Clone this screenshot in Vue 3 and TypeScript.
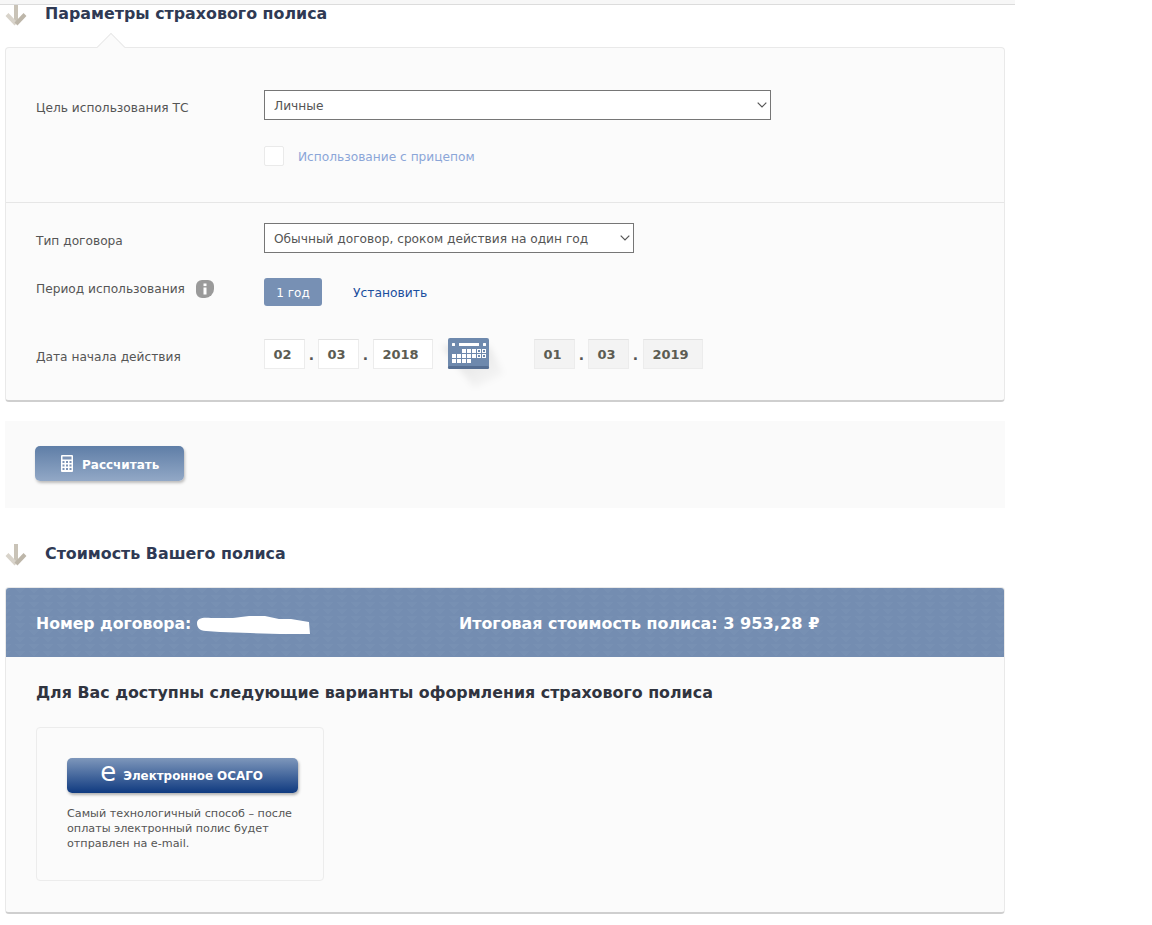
<script setup lang="ts">
const startDate = ['02', '03', '2018']
const endDate = ['01', '03', '2019']
const solidCells: number[][] = [
  [2, 0], [3, 0], [4, 0],
  [0, 1], [1, 1], [2, 1], [3, 1], [4, 1],
  [0, 2], [1, 2], [2, 2], [3, 2],
]
const hollowCells: number[][] = [
  [5, 0], [6, 0],
  [5, 1], [6, 1],
]
</script>

<template>
  <div class="page">
    <div class="strip"></div>

    <div class="head head-first">
      <svg class="arrow" width="22" height="23" viewBox="0 0 22 23">
        <path d="M11 0v20" fill="none" stroke="#c9c3b7" stroke-width="4" />
        <path d="M2 10.500l9 9.500" fill="none" stroke="#d8d3ca" stroke-width="4" />
        <path d="M20 10.500l-9 9.500" fill="none" stroke="#bdb6a9" stroke-width="4" />
      </svg>
      <h2>Параметры страхового полиса</h2>
    </div>

    <section class="panel params">
      <span class="notch"></span>
      <div class="block block-a">
        <div class="row row-use">
          <label class="lbl">Цель использования ТС</label>
          <select class="sel sel-wide"><option>Личные</option></select>
        </div>
        <div class="row row-check">
          <span class="lbl"></span>
          <span class="box"></span>
          <span class="check-text">Использование с прицепом</span>
        </div>
      </div>
      <div class="block block-b">
        <div class="row row-type">
          <label class="lbl">Тип договора</label>
          <select class="sel sel-mid"><option>Обычный договор, сроком действия на один год</option></select>
        </div>
        <div class="row row-period">
          <div class="lbl lbl-info">
            Период использования
            <svg class="info" width="18" height="18" viewBox="0 0 18 18">
              <path d="M6 0h6a6 6 0 0 1 6 6v3a9 9 0 0 1-9 9H6a6 6 0 0 1-6-6V6a6 6 0 0 1 6-6z" fill="#9a9a9a" />
              <rect x="7.500" y="7.500" width="3" height="7" fill="#fff" />
              <rect x="7.500" y="3.500" width="3" height="2.600" fill="#fff" />
            </svg>
          </div>
          <span class="pill">1 год</span>
          <a class="set">Установить</a>
        </div>
        <div class="row row-date">
          <label class="lbl">Дата начала действия</label>
          <div class="dates">
            <template v-for="(d, i) in startDate" :key="'s' + i">
              <span class="dot" v-if="i > 0">.</span>
              <span class="dt" :class="{ year: i === 2 }">{{ d }}</span>
            </template>
          </div>
          <span class="cal">
            <svg class="cal-icon" width="41" height="31" viewBox="0 0 41 31">
              <defs>
                <linearGradient id="calShade" x1="0" y1="0" x2="1" y2="1">
                  <stop offset="0.300" stop-color="#000" stop-opacity="0.09" />
                  <stop offset="1" stop-color="#000" stop-opacity="0" />
                </linearGradient>
                <filter id="calBlur" x="-30%" y="-30%" width="160%" height="160%">
                  <feGaussianBlur stdDeviation="3" />
                </filter>
              </defs>
              <polygon points="-6,8 41,8 56,36 26,50" fill="url(#calShade)" filter="url(#calBlur)" />
              <rect width="41" height="31" rx="2" fill="#6e89ad" />
              <rect y="28" width="41" height="3" rx="1.500" fill="#566f93" />
              <rect x="11" y="5" width="20" height="3" fill="#fff" />
              <rect x="4" y="5" width="3" height="3" rx="0.500" fill="#fff" />
              <rect x="35" y="5" width="3" height="3" rx="0.500" fill="#fff" />
              <rect
                v-for="(p, i) in solidCells"
                :key="'c' + i"
                :x="4 + p[0] * 5"
                :y="11 + p[1] * 5"
                width="4"
                height="4"
                fill="#fff"
              />
              <rect
                v-for="(p, i) in hollowCells"
                :key="'h' + i"
                :x="4.500 + p[0] * 5"
                :y="11.500 + p[1] * 5"
                width="3"
                height="3"
                fill="none"
                stroke="#fff"
                stroke-width="1"
              />
            </svg>
          </span>
          <div class="dates dates-end">
            <template v-for="(d, i) in endDate" :key="'e' + i">
              <span class="dot" v-if="i > 0">.</span>
              <span class="dt off" :class="{ year: i === 2 }">{{ d }}</span>
            </template>
          </div>
        </div>
      </div>
    </section>

    <div class="calc">
      <button class="btn-calc">
        <svg width="12" height="17" viewBox="0 0 12 17">
          <rect width="12" height="17" rx="1" fill="#fff" />
          <rect x="1.500" y="1.500" width="9" height="3" fill="#7c93b5" />
          <g fill="#7c93b5">
            <rect x="1.500" y="6" width="2" height="2" /><rect x="5" y="6" width="2" height="2" /><rect x="8.500" y="6" width="2" height="2" />
            <rect x="1.500" y="9.500" width="2" height="2" /><rect x="5" y="9.500" width="2" height="2" /><rect x="8.500" y="9.500" width="2" height="2" />
            <rect x="1.500" y="13" width="2" height="2" /><rect x="5" y="13" width="2" height="2" /><rect x="8.500" y="13" width="2" height="2" />
          </g>
        </svg>
        <span class="calc-text">Рассчитать</span>
      </button>
    </div>

    <div class="head head-second">
      <svg class="arrow" width="22" height="23" viewBox="0 0 22 23">
        <path d="M11 0v20" fill="none" stroke="#c9c3b7" stroke-width="4" />
        <path d="M2 10.500l9 9.500" fill="none" stroke="#d8d3ca" stroke-width="4" />
        <path d="M20 10.500l-9 9.500" fill="none" stroke="#bdb6a9" stroke-width="4" />
      </svg>
      <h2>Стоимость Вашего полиса</h2>
    </div>

    <section class="panel result">
      <div class="band">
        <div class="contract">
          Номер договора:
          <svg class="blot" width="113" height="20" viewBox="0 0 113 20">
            <path d="M0 8C0 3 6 2 14 3l22 0 16-2 16 0 14 3 12 0 18 3 1 12-30 0-30-1-30-1-14-1C2 16 0 12 0 8z" fill="#fff" />
          </svg>
        </div>
        <div class="total">Итоговая стоимость полиса: <span class="sum">3 953,28 ₽</span></div>
      </div>
      <div class="body">
        <h3>Для Вас доступны следующие варианты оформления страхового полиса</h3>
        <div class="card">
          <button class="btn-osago"><span class="e">e</span>Электронное ОСАГО</button>
          <p>Самый технологичный способ – после оплаты электронный полис будет отправлен на e-mail.</p>
        </div>
      </div>
    </section>
  </div>
</template>

<style>
html, body { background: #fff; }
</style>

<style scoped>
.page {
  width: 1015px;
  height: 925px;
  font-family: "DejaVu Sans", Verdana, sans-serif;
  color: #555;
  font-size: 12px;
  overflow: hidden;
}
.strip {
  position: relative;
  z-index: 1;
  height: 4px;
  background: #f7f7f7;
  border-bottom: 1px solid #dcdcdc;
}
.head {
  display: flex;
  align-items: center;
  padding-left: 5px;
  height: 20px;
}
.head-first { margin-top: -1px; }
.head-second { margin-top: 36px; }
.arrow { flex: none; margin-top: 2px; }
.head h2 {
  margin: -2px 0 0 18px;
  font-size: 15.87px;
  font-weight: 700;
  color: #2f3a54;
  white-space: nowrap;
}
.panel {
  position: relative;
  margin-left: 5px;
  width: 1000px;
  box-sizing: border-box;
  background: #fbfbfb;
  border: 1px solid #e9e9e9;
  border-bottom: 2px solid #cfcfcf;
  border-radius: 4px;
}
.params { margin-top: 23px; height: 355px; }
.notch {
  position: absolute;
  top: -11px;
  left: 95px;
  width: 20px;
  height: 20px;
  box-sizing: border-box;
  background: #fbfbfb;
  border-top: 1px solid #e9e9e9;
  border-left: 1px solid #e9e9e9;
  transform: rotate(45deg);
}
.block-a {
  position: relative;
  height: 155px;
  box-sizing: border-box;
  padding-top: 42px;
  border-bottom: 1px solid #e6e6e6;
}
.block-b { padding-top: 20px; }
.row { display: flex; align-items: center; padding-left: 30px; }
.lbl { width: 228px; flex: none; color: #555; font-size: 12.2px; }
.lbl-info { display: flex; align-items: center; margin-top: -6px; white-space: nowrap; }
.info { margin-left: 11px; flex: none; }
.sel {
  height: 30px;
  box-sizing: border-box;
  font: 12.2px "DejaVu Sans", Verdana, sans-serif;
  color: #555;
  border: 1px solid #767676;
  border-radius: 0;
  padding: 1px 0 0 9px;
  appearance: none;
  background: #fff url("data:image/svg+xml,%3Csvg xmlns='http://www.w3.org/2000/svg' width='10' height='6'%3E%3Cpath d='M.7.7l4.300 4.300L9.300.7' fill='none' stroke='%23555' stroke-width='1.200'/%3E%3C/svg%3E") no-repeat right 3.500px center;
}
.sel-wide { width: 507px; }
.sel-mid { width: 370px; }
.row-use .lbl { margin-top: 6px; }
.row-type .lbl { margin-top: 6px; }
.row-date .lbl { margin-top: 6px; }
.row-check { margin-top: 26px; }
.box {
  width: 20px;
  height: 20px;
  box-sizing: border-box;
  background: #fff;
  border: 1px solid #eaeaea;
  border-radius: 2px;
}
.check-text { margin: 2px 0 0 14px; color: #8ba6d8; font-size: 12.2px; }
.row-period { margin-top: 25px; }
.pill {
  width: 58px;
  height: 28px;
  line-height: 30px;
  text-align: center;
  color: #fff;
  background: #7790b4;
  border-radius: 3px;
}
.set { margin: 2px 0 0 31px; color: #1b4f9e; font-size: 12.3px; }
.row-date { margin-top: 32px; }
.dates { display: flex; align-items: center; }
.dates-end { margin-left: 45px; }
.dt {
  width: 41px;
  height: 30px;
  line-height: 29px;
  box-sizing: border-box;
  text-align: center;
  background: #fff;
  border: 1px solid #ececec;
  border-top-color: #e2e2e2;
  font-weight: 700;
  font-size: 13px;
  color: #5c5c52;
  padding-right: 4px;
}
.dt.year { width: 60px; margin-left: 1px; padding-right: 5px; }
.dt.off { background: #f3f3f3; }
.dot {
  width: 13px;
  text-align: center;
  font-weight: 700;
  font-size: 14px;
  color: #555;
  padding-top: 2px;
}
.cal {
  display: block;
  height: 31px;
  margin-left: 15px;
}
.cal-icon { display: block; overflow: visible; }
.calc {
  margin: 19px 0 0 5px;
  width: 1000px;
  height: 87px;
  background: #fafafa;
  padding: 25px 0 0 30px;
  box-sizing: border-box;
}
.btn-calc {
  width: 149px;
  height: 35px;
  border: 0;
  border-radius: 5px;
  background: linear-gradient(#5f7ea7, #92a8c6);
  box-shadow: 1px 2px 3px rgba(0, 0, 0, 0.25);
  color: #fff;
  font: 700 12px "DejaVu Sans", Verdana, sans-serif;
  display: flex;
  align-items: center;
  padding: 0 0 0 26px;
  gap: 9px;
}
.calc-text { margin-top: 2px; }
.result { margin-top: 23px; height: 327px; }
.band {
  display: flex;
  align-items: center;
  height: 69px;
  padding: 1px 0 0 30px;
  box-sizing: border-box;
  color: #fff;
  font-size: 15.87px;
  font-weight: 700;
  border-radius: 3px 3px 0 0;
  background-color: #748db1;
  background-image:
    linear-gradient(135deg, rgba(255, 255, 255, 0.025) 25%, transparent 25%),
    linear-gradient(225deg, rgba(255, 255, 255, 0.025) 25%, transparent 25%);
  background-size: 14px 7px;
}
.contract { width: 423px; flex: none; display: flex; align-items: center; white-space: nowrap; font-size: 15.7px; }
.blot { margin: 3px 0 0 6px; flex: none; }
.total { white-space: nowrap; }
.sum { font-size: 16.2px; }
.body { padding: 27px 30px 0; }
.body h3 { margin: 0; font-size: 15.87px; font-weight: 700; color: #30343f; line-height: 18px; }
.card {
  margin-top: 25px;
  width: 288px;
  height: 154px;
  box-sizing: border-box;
  border: 1px solid #ececec;
  border-radius: 4px;
  padding: 30px 25px 0 30px;
}
.btn-osago {
  width: 231px;
  height: 35px;
  border: 0;
  border-radius: 5px;
  background: linear-gradient(#7e97bb, #0f3a80);
  box-shadow: 1px 2px 3px rgba(0, 0, 0, 0.3);
  color: #fff;
  font: 700 11.9px "DejaVu Sans", Verdana, sans-serif;
  display: flex;
  align-items: center;
  justify-content: center;
  gap: 7px;
  padding: 0 2px 0 0;
}
.e { font-size: 26px; font-weight: 400; line-height: 1; margin-top: -8px; }
.card p {
  margin: 13px 0 0;
  font-size: 11.2px;
  line-height: 15px;
  color: #555;
}
</style>
